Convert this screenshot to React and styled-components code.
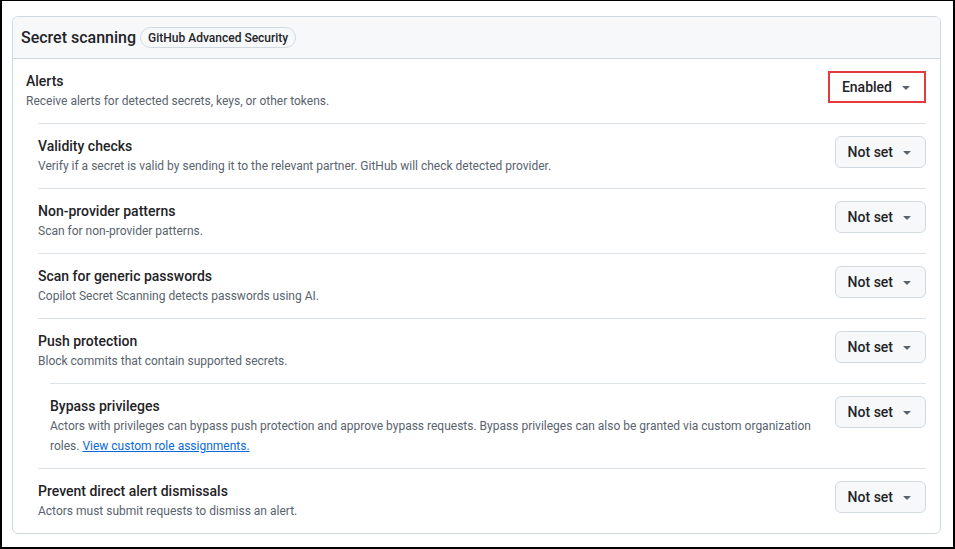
import React from "react";
import styled, { createGlobalStyle } from "styled-components";

const Global = createGlobalStyle`
  html, body { margin: 0; padding: 0; background: #fff; }
  body { font-family: Roboto, "Liberation Sans", sans-serif; color: #1f2328; }
  * { box-sizing: border-box; }
`;

const Frame = styled.div`
  width: 955px;
  height: 549px;
  border-style: solid;
  border-color: #000;
  border-width: 1px 2px 2px 2px;
  padding: 15px 12px 0 10px;
  background: #fff;
`;

const Card = styled.section`
  border: 1px solid #d1d9e0;
  border-radius: 6px;
  overflow: hidden;
`;

const Header = styled.header`
  display: flex;
  align-items: center;
  gap: 4px;
  height: 42px;
  padding: 0 8px;
  background: #f6f8fa;
  border-bottom: 1px solid #d1d9e0;
`;

const Title = styled.h2`
  margin: 0;
  font-size: 16px;
  font-weight: 500;
  line-height: 24px;
  color: #1f2328;
`;

const Pill = styled.span`
  display: inline-flex;
  align-items: center;
  height: 21px;
  padding: 0 7px;
  border: 1px solid #d1d9e0;
  border-radius: 999px;
  font-size: 12px;
  font-weight: 500;
  color: #1f2328;
  background: #f6f8fa;
`;

const Body = styled.div`
  padding: 0 14px 0 13px;
`;

const List = styled.div`
  margin-left: 12px;
`;

const Row = styled.div`
  display: flex;
  align-items: flex-start;
  gap: 16px;
  padding: 12px 0;
  border-top: ${(p) => (p.$first ? "none" : "1px solid #dde2e7")};
`;

const Text = styled.div`
  flex: 1;
  min-width: 0;
`;

const RowTitle = styled.div`
  font-size: 14px;
  font-weight: 500;
  line-height: 20px;
  color: #1f2328;
`;

const Desc = styled.div`
  font-size: 12px;
  line-height: 20px;
  color: #59636e;
`;

const Link = styled.a`
  color: #0969da;
  text-decoration: underline;
`;

const Button = styled.button`
  flex: none;
  display: inline-flex;
  align-items: center;
  gap: 6px;
  height: 32px;
  padding: 0 10px 0 12px;
  font-family: inherit;
  font-size: 14px;
  font-weight: 500;
  color: #1f2328;
  background: ${(p) => (p.$highlight ? "#fff" : "#f6f8fa")};
  border: ${(p) => (p.$highlight ? "2px solid #e5393e" : "1px solid #d1d9e0")};
  border-radius: ${(p) => (p.$highlight ? "0" : "6px")};
  cursor: pointer;
`;

const Caret = () => (
  <svg width="16" height="16" viewBox="0 0 16 16" fill="#59636e" aria-hidden="true">
    <path d="m4.427 7.427 3.396 3.396a.25.25 0 0 0 .354 0l3.396-3.396A.25.25 0 0 0 11.396 7H4.604a.25.25 0 0 0-.177.427Z" />
  </svg>
);

const Setting = ({ title, desc, value, first, highlight }) => (
  <Row $first={first}>
    <Text>
      <RowTitle>{title}</RowTitle>
      <Desc>{desc}</Desc>
    </Text>
    <Button $highlight={highlight}>
      {value}
      <Caret />
    </Button>
  </Row>
);

export default function App() {
  return (
    <>
      <Global />
      <Frame>
        <Card>
          <Header>
            <Title>Secret scanning</Title>
            <Pill>GitHub Advanced Security</Pill>
          </Header>
          <Body>
            <Setting
              first
              highlight
              title="Alerts"
              desc="Receive alerts for detected secrets, keys, or other tokens."
              value="Enabled"
            />
            <List>
              <Setting
                title="Validity checks"
                desc="Verify if a secret is valid by sending it to the relevant partner. GitHub will check detected provider."
                value="Not set"
              />
              <Setting
                title="Non-provider patterns"
                desc="Scan for non-provider patterns."
                value="Not set"
              />
              <Setting
                title="Scan for generic passwords"
                desc="Copilot Secret Scanning detects passwords using AI."
                value="Not set"
              />
              <Setting
                title="Push protection"
                desc="Block commits that contain supported secrets."
                value="Not set"
              />
              <List>
                <Setting
                  title="Bypass privileges"
                  desc={
                    <>
                      Actors with privileges can bypass push protection and approve bypass requests. Bypass
                      privileges can also be granted via custom organization roles.{" "}
                      <Link href="#">View custom role assignments.</Link>
                    </>
                  }
                  value="Not set"
                />
              </List>
              <Setting
                title="Prevent direct alert dismissals"
                desc="Actors must submit requests to dismiss an alert."
                value="Not set"
              />
            </List>
          </Body>
        </Card>
      </Frame>
    </>
  );
}
